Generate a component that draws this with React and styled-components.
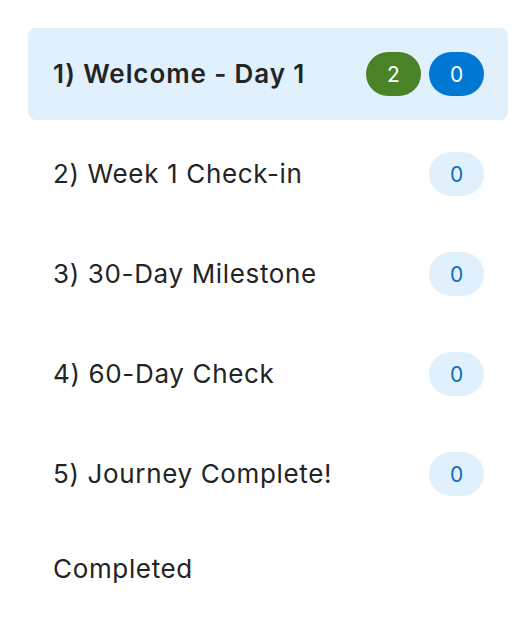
import React from "react";
import styled, { createGlobalStyle } from "styled-components";

const Global = createGlobalStyle`
  html, body { margin: 0; padding: 0; background: #ffffff; }
  body { font-family: Inter, "Noto Sans", sans-serif; color: #242424; }
`;

const List = styled.ul`
  list-style: none;
  margin: 0;
  padding: 28px 22px 0 28px;
  display: flex;
  flex-direction: column;
  gap: 8px;
`;

const Row = styled.li`
  display: flex;
  align-items: center;
  justify-content: space-between;
  min-height: ${(p) => (p.$compact ? "0" : "44px")};
  padding: 24px 24px 24px 25px;
  border-radius: 8px;
  background: ${(p) => (p.$selected ? "#e0f1fd" : "transparent")};
`;

const Label = styled.span`
  font-size: 26px;
  line-height: 34px;
  letter-spacing: ${(p) => (p.$selected ? "0.9px" : "0.65px")};
  font-weight: ${(p) => (p.$selected ? 600 : 400)};
  color: #242424;
`;

const Badges = styled.div`
  display: flex;
  gap: 8px;
`;

const tones = {
  green: { bg: "#4a8228", fg: "#ffffff" },
  blue: { bg: "#0078d4", fg: "#ffffff" },
  light: { bg: "#e0f1fd", fg: "#0f6cbd" },
};

const Badge = styled.span`
  display: inline-flex;
  align-items: center;
  justify-content: center;
  width: 55px;
  height: 44px;
  border-radius: 22px;
  font-size: 21px;
  background: ${(p) => tones[p.$tone].bg};
  color: ${(p) => tones[p.$tone].fg};
`;

const items = [
  { label: "1) Welcome - Day 1", selected: true, badges: [["2", "green"], ["0", "blue"]] },
  { label: "2) Week 1 Check-in", badges: [["0", "light"]] },
  { label: "3) 30-Day Milestone", badges: [["0", "light"]] },
  { label: "4) 60-Day Check", badges: [["0", "light"]] },
  { label: "5) Journey Complete!", badges: [["0", "light"]] },
  { label: "Completed", badges: [] },
];

export default function App() {
  return (
    <>
      <Global />
      <List>
        {items.map((it) => (
          <Row key={it.label} $selected={it.selected} $compact={it.badges.length === 0}>
            <Label $selected={it.selected}>{it.label}</Label>
            {it.badges.length > 0 && (
              <Badges>
                {it.badges.map(([n, t], i) => (
                  <Badge key={i} $tone={t}>{n}</Badge>
                ))}
              </Badges>
            )}
          </Row>
        ))}
      </List>
    </>
  );
}
